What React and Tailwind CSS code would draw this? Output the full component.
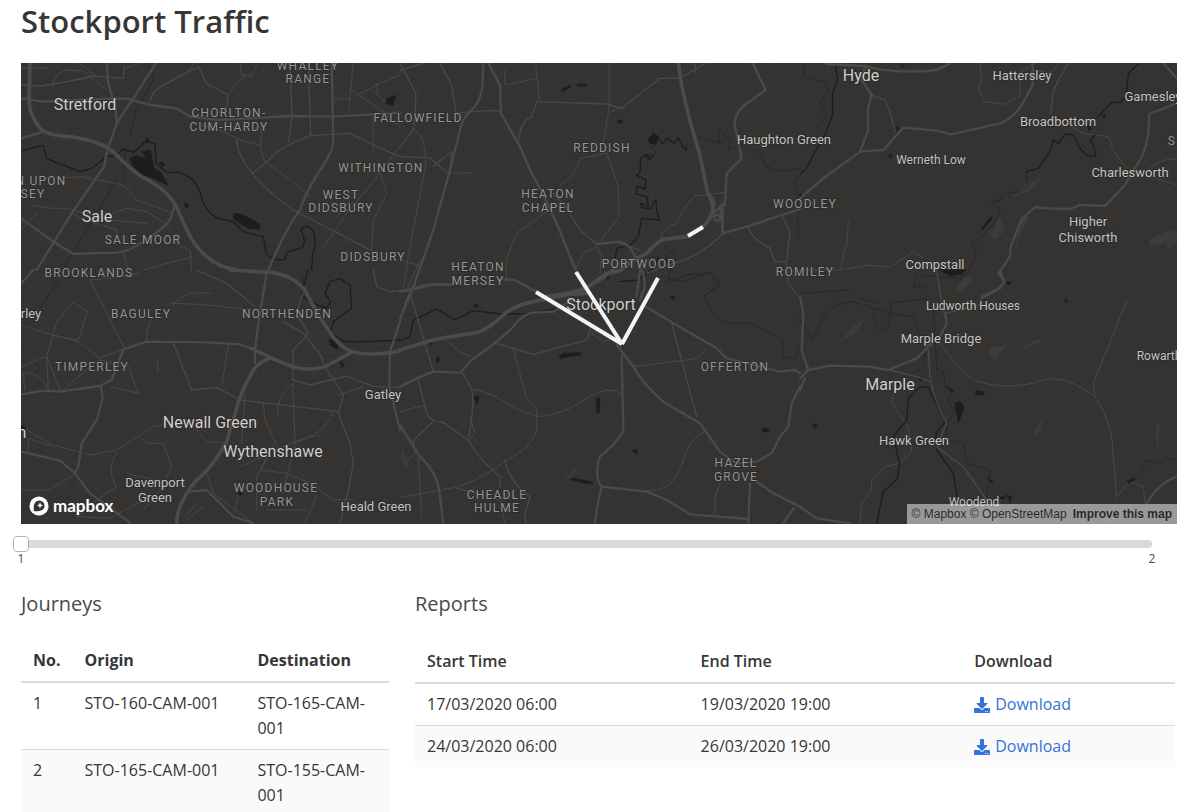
import React, { useState } from 'react';
import { FaDownload } from 'react-icons/fa';

const JOURNEYS = [
  { no: 1, origin: 'STO-160-CAM-001', destination: 'STO-165-CAM-001' },
  { no: 2, origin: 'STO-165-CAM-001', destination: 'STO-155-CAM-001' },
];

const REPORTS = [
  { start: '17/03/2020 06:00', end: '19/03/2020 19:00' },
  { start: '24/03/2020 06:00', end: '26/03/2020 19:00' },
];

// x = centre of the label, y = baseline
const TOWNS = [
  { name: 'Stretford', x: 85, y: 110 },
  { name: 'Sale', x: 97, y: 222 },
  { name: 'Hyde', x: 861, y: 81 },
  { name: 'Newall Green', x: 210, y: 428 },
  { name: 'Wythenshawe', x: 273, y: 457 },
  { name: 'Stockport', x: 601, y: 310 },
  { name: 'Marple', x: 890, y: 390 },
  { name: 'n', x: 22, y: 438 },
];

const VILLAGES = [
  { name: 'Hattersley', x: 1022, y: 80 },
  { name: 'Gamesley', x: 1153, y: 101 },
  { name: 'Broadbottom', x: 1058, y: 126 },
  { name: 'Haughton Green', x: 784, y: 144 },
  { name: 'Charlesworth', x: 1130, y: 177 },
  { name: 'Higher', x: 1088, y: 226 },
  { name: 'Chisworth', x: 1088, y: 242 },
  { name: 'Compstall', x: 935, y: 269 },
  { name: 'Marple Bridge', x: 941, y: 343 },
  { name: 'Hawk Green', x: 914, y: 445 },
  { name: 'Gatley', x: 383, y: 399 },
  { name: 'Davenport', x: 155, y: 487 },
  { name: 'Green', x: 155, y: 502 },
  { name: 'Heald Green', x: 376, y: 511 },
  { name: 'rley', x: 31, y: 318 },
];

const HAMLETS = [
  { name: 'Werneth Low', x: 931, y: 164 },
  { name: 'Ludworth Houses', x: 973, y: 310 },
  { name: 'Rowarth', x: 1159, y: 360 },
  { name: 'Woodend', x: 974, y: 506 },
];

const SUBURBS = [
  { name: 'WHALLEY', x: 308, y: 70 },
  { name: 'RANGE', x: 308, y: 83 },
  { name: 'FALLOWFIELD', x: 418, y: 122 },
  { name: 'CHORLTON-', x: 229, y: 117 },
  { name: 'CUM-HARDY', x: 229, y: 131 },
  { name: 'WITHINGTON', x: 381, y: 172 },
  { name: 'WEST', x: 341, y: 199 },
  { name: 'DIDSBURY', x: 341, y: 212 },
  { name: 'REDDISH', x: 602, y: 152 },
  { name: 'HEATON', x: 548, y: 198 },
  { name: 'CHAPEL', x: 548, y: 212 },
  { name: 'N UPON', x: 41, y: 185 },
  { name: 'SEY', x: 33, y: 198 },
  { name: 'SALE MOOR', x: 143, y: 244 },
  { name: 'BROOKLANDS', x: 89, y: 277 },
  { name: 'DIDSBURY', x: 373, y: 261 },
  { name: 'HEATON', x: 478, y: 271 },
  { name: 'MERSEY', x: 478, y: 285 },
  { name: 'PORTWOOD', x: 639, y: 268 },
  { name: 'WOODLEY', x: 805, y: 208 },
  { name: 'ROMILEY', x: 805, y: 276 },
  { name: 'BAGULEY', x: 141, y: 318 },
  { name: 'NORTHENDEN', x: 287, y: 318 },
  { name: 'TIMPERLEY', x: 92, y: 371 },
  { name: 'OFFERTON', x: 735, y: 371 },
  { name: 'HAZEL', x: 736, y: 467 },
  { name: 'GROVE', x: 736, y: 481 },
  { name: 'WOODHOUSE', x: 276, y: 492 },
  { name: 'PARK', x: 277, y: 506 },
  { name: 'CHEADLE', x: 497, y: 499 },
  { name: 'HULME', x: 497, y: 512 },
  { name: 'S', x: 1172, y: 145 },
];

// Map sheets, every sheet is 400 units wide and drawn at 3x detail
const SHEETS = [
  {
    id: 'nw',
    transform: 'translate(0 0) scale(0.33333)',
    motorways: 'M90 189L87 310Q92 352 125 390Q145 405 210 410Q285 420 325 445C365 475 390 510 425 530C470 552 505 580 525 612C555 672 570 730 620 770Q655 802 710 809',
    primary: 'M468 189L410 280L350 370L322 450L312 500L215 640L110 810M63 415L125 397M350 370L348 330L325 250L320 189M995 189L1000 420Q1000 450 970 495Q920 570 900 630Q860 680 805 810M525 615L510 660Q480 695 430 725Q380 762 330 758L220 762L160 725L63 655M63 295L130 305L340 295L380 296L450 315L530 325L570 350L660 360L870 348L1000 350L1200 338',
    secondary: 'M710 420Q712 465 757 520Q795 570 880 630L1120 755M757 520Q800 490 830 455Q880 425 930 407L1050 400L1120 435L1200 470M870 189L876 350L866 425M925 189L932 405M63 255L120 258Q180 250 285 228L370 235L372 200M450 305Q455 270 500 250L595 200L620 250L685 285L680 320',
    minor: 'M63 204L145 204M160 260Q155 225 200 210L250 213L320 270M370 205L420 190M235 189L285 225M720 189L725 225L755 230L770 195M685 285L710 250L740 225M1060 189L1046 330M1003 297L1050 297M1046 265L1130 320L1200 380M1120 350L1120 460M1060 290L1140 250L1200 225M1130 250L1132 285L1160 310M600 375L660 390L720 420L785 437M785 370L782 450L795 485L870 540L930 590M590 189L600 210M585 189L560 215M170 535L245 530L370 555L410 600L520 640M100 615L150 625L200 625L330 660L440 670M340 640L380 625L440 635L510 680M210 635L240 655L350 690L350 720M63 690L110 640M370 760L385 810M520 730L570 750L575 810M575 770L430 810M1200 440L1100 570L1040 640L965 750M1140 520L1160 580L1120 660L1115 750M1050 600L1010 650',
    rivers: 'M63 452L130 436L140 475L175 490L240 515L275 505L320 470L350 465L370 447L402 457L438 422L465 432L468 490L500 517L540 517Q585 532 600 575Q610 635 655 655L700 665L730 695L790 710L798 760Q820 785 852 778L865 755L908 742Q920 720 902 690Q920 665 940 695Q952 725 938 765L935 810',
    canals: 'M436 189L452 205M460 225L455 250L408 330L390 410M268 678L220 752L190 810M375 450L370 540M350 540L268 678',
    water: 'M390 475L405 467L440 475L425 455L452 450L455 470L462 505L485 520L505 557L470 540L430 525L400 500ZM480 486L490 487L495 497L484 497ZM556 610L566 613L562 624L554 620ZM702 640L725 643L780 672L778 688L745 685L722 672L700 655ZM1162 295L1188 286L1178 318L1158 310ZM438 412L448 420L440 430Z',
  },
  {
    id: 'n',
    transform: 'translate(400 60) scale(0.33333)',
    motorways: 'M835 10L845 75Q865 175 900 285L922 395L940 440Q940 470 910 500M860 530L790 538Q765 550 740 580L700 600L660 632L620 640L550 690L455 708',
    primary: 'M250 10L247 80Q240 130 210 155Q185 175 175 230L150 330L100 510L40 680L25 720M265 10L300 75L303 160L360 260L390 330L420 385L470 490L527 630M0 693L30 690L90 675L155 673M310 658L345 660L405 693M968 430L968 520L1040 500L1200 447M590 552L660 545Q690 550 705 590L730 640L735 680L720 720M975 435L980 340L1025 295L1003 190Q1010 145 1055 120L1097 90L1058 10',
    secondary: 'M120 10L155 75L168 160L210 155M0 10L48 100L45 170L40 210L0 260M0 30L70 10M210 155L260 152L303 153M0 290L90 293L150 345L155 275L100 318M590 552L540 510L500 445L460 400M410 125L395 170Q360 185 357 240M410 125L620 132L665 145L780 55L840 55L915 10M1040 500L1070 540L1110 565L1125 605L1160 605L1170 515L1145 465M970 520Q900 590 820 610L740 640M640 545L720 570',
    minor: 'M407 10L418 120M315 30L315 75L410 55M885 10L888 45M628 10L628 140L610 250L655 380L657 470L600 545M615 280L540 295Q525 355 480 375M635 155L665 140M40 210Q75 220 78 310L30 560L10 680M160 340L215 338M440 455L350 520L318 600L320 655M975 397L885 408Q850 440 830 490Q790 500 780 535M0 600L60 618M527 630L550 580L590 560L605 590L600 640M1160 605L1165 670L1195 710M60 600L20 690',
    rivers: 'M850 262L835 232L822 250L800 235L788 252L770 228L760 245M758 285L750 300L735 285L722 295L720 340L708 345L738 360L735 388L712 378L708 400L742 412L745 440L722 430L725 442L750 447L768 418L770 450L778 480L725 475L715 530L690 555L650 565L645 600M660 665L715 660L760 625L775 590',
    canals: 'M890 228L960 250L955 205L990 245L985 270L1000 265M1070 265L1100 320L1150 335L1200 325M755 255L768 280L740 300M800 610Q790 580 815 575L830 600Q810 620 805 660L850 665L930 635L960 665L915 710M1200 345L1183 370L1193 410L1195 530',
    water: 'M485 88L512 75L510 83L488 96ZM532 72L558 73L557 78L534 78ZM655 180L665 180L668 188L657 190ZM745 237L760 220L775 230L768 255L748 248ZM852 262L862 264L858 272ZM738 282L748 282L745 290ZM815 710L823 712L821 720ZM618 648L628 648L624 658Z',
  },
  {
    id: 'ne',
    transform: 'translate(800 60) scale(0.33333)',
    motorways: '',
    primary: 'M240 28Q320 40 410 30L450 10M0 415L70 355L180 275L250 270L310 203L410 212L455 223L600 190Q640 175 665 135L698 75L698 10M80 12L190 18L240 28M195 18L185 60L215 105L203 150L205 210L180 275M1131 130L1048 162L1045 220Q1035 290 1000 330L975 375L915 438L840 435L810 447L745 445L705 442Q660 475 650 515L632 560L630 590L595 640L615 665L590 690L545 710M1090 10L1131 55',
    secondary: 'M215 105L255 120L270 155L285 215M805 10L775 60L760 95L752 160',
    minor: 'M540 10L545 60L535 80L550 125L610 133L660 110L660 40L700 10M815 200L850 220L925 230L945 280L980 325M1045 330Q1070 295 1131 297M1070 355L1131 375M145 485L140 550L120 628M0 630L120 630L210 615L270 622L340 575L370 595M410 640L425 720M700 30L750 40L780 10',
    rivers: 'M1018 10L985 40L978 110L960 128L935 126L890 175M885 225L872 240L888 275L885 290L860 285L840 265L820 225L795 222L775 250L760 240L750 275L715 325L678 335M105 10L113 60L97 100L98 165L68 240L40 285L20 325L0 343',
    canals: 'M678 335L685 378L660 395L605 403L600 420L573 425L602 450L590 480L545 530L515 550L530 580L510 630L480 655L350 645L340 680L380 685M10 10L15 50L70 65L88 95L60 125L80 165L50 200M0 700L150 690',
    water: 'M543 507L572 470L577 475L550 508ZM425 630L490 632L488 642L450 648ZM865 200L875 205L868 212ZM910 163L918 168L912 175ZM290 200L298 203L292 214ZM265 284L278 287L272 295ZM303 14L314 17L308 23ZM620 665L634 668L626 674ZM0 400L8 410L0 420Z',
  },
  {
    id: 'sw',
    transform: 'translate(0 270) scale(0.33333)',
    motorways: 'M690 0L820 8Q890 20 920 70Q950 130 985 180Q1015 230 1055 245Q1120 260 1200 243M755 235L810 262Q860 285 880 290Q920 305 975 290L1055 247M810 265Q765 280 750 320Q720 370 710 415L680 515Q640 590 590 630Q530 700 530 760',
    primary: 'M800 10L775 160L765 240L765 280M63 373L130 362L180 365L300 348L335 330L370 238L440 215L620 217L720 223L765 240M303 348L308 385L290 450L245 520L235 590L225 610M63 545L180 572L225 610L270 670L390 758M1200 155L1170 245L1168 350L1200 480M63 40L100 0M570 665L620 660L700 740L760 760',
    secondary: 'M915 50L890 130L925 190L880 240L878 330L930 345L1040 318L1120 350L1200 352M955 240L975 290L1030 375L1015 430L1050 520L1060 580L1045 660L1020 760M590 0L680 40L740 90L765 110M850 155L910 190L950 240M520 220L575 360L650 352L720 390L1015 425M1120 0L1130 50L1170 65L1200 62',
    minor: 'M270 30L372 230M63 165L155 195L235 210L262 125L220 97L170 155L140 260L63 290M160 195L235 215L300 265L372 235M75 360L70 310Q120 300 145 360L140 260L180 360M190 360L270 290L300 270L385 290L415 370L335 350M455 145L440 185L440 215M520 105Q545 60 630 70M510 100L600 103L760 120M685 223L665 348M473 265L473 305M735 370L730 450L725 520M790 400L795 450L830 525M835 440Q820 390 878 340L885 520L855 640M880 520Q980 490 1000 425M590 480L620 515L680 520M820 525L780 600L860 610L930 640L1000 690L1060 688M800 570L770 620L770 720M830 540Q900 505 960 495M63 470L160 525L270 555L350 540L460 470L490 465M420 500L440 520L490 520L515 590L480 660L430 720M350 545Q315 600 350 650L290 690L230 740L330 745L430 690M63 660L145 660L230 610M560 750L610 710M555 740L590 700M700 740L715 680L745 640M915 760L950 680M160 530L85 505L85 540M720 590L790 560M620 610L640 670L760 760M800 720L920 720M1015 375L1090 350M460 630L380 610M272 30L330 25L420 10',
    rivers: 'M923 0L905 75L930 95L980 115L992 95L975 70L990 35L1020 25L1050 45L1055 115L1000 155L990 190L1035 215L1100 215L1200 210',
    canals: 'M180 25L145 75L120 115M63 470L75 475M905 75L910 20',
    water: 'M988 208L1015 215L1012 238L990 225ZM1020 272L1035 285L1026 292ZM63 465L78 475L72 485L63 478ZM715 665L728 670L720 678Z',
  },
  {
    id: 's',
    transform: 'translate(400 270) scale(0.33333)',
    motorways: 'M0 240L80 215L120 205L230 188Q270 175 310 135Q345 105 400 95L520 70L590 35L640 0M440 78L560 70',
    primary: 'M0 350L50 325L100 305L180 308L215 270Q290 220 340 170Q370 130 400 128L460 125L490 105L520 90M650 225L700 290Q730 345 790 395L900 460L960 545L1010 580L1070 575L1115 550L1140 500L1165 470L1175 400L1200 350M665 260L670 480Q660 510 600 560Q580 620 605 650Q590 710 585 760M605 650L740 665L800 690L870 733L1045 747M735 108L820 160L950 235L980 265L1080 290L1140 305L1185 300L1200 310M0 465L60 560Q115 610 120 680L130 760M1050 640L1045 760M1070 635L1120 670L1200 710M1180 715L1150 760M720 0L710 80M45 40L25 80L0 150M0 65L20 60L90 43L155 45',
    secondary: 'M55 330L80 430Q90 455 130 457L205 510Q230 560 300 620L300 650M315 570Q330 640 390 680L375 730L378 760M30 70L100 305M290 220L400 253L560 210L575 165M185 305L215 355Q225 400 205 510M45 550L40 510L100 455M815 160L890 440',
    minor: 'M340 235L378 380L410 415L410 480Q390 540 320 570Q260 620 175 650L0 683M220 357Q280 370 345 415L410 440Q480 440 560 385Q620 345 665 370M210 510L225 490L210 440M140 210Q175 250 215 260M620 180L580 185L560 210M700 290L860 270Q900 270 920 235M910 485Q860 520 850 570Q830 650 770 660L740 662M945 735L945 680L960 640M500 630L530 595M55 560L65 740M0 425L75 405M170 655L300 690L315 760M10 540Q0 560 20 590L18 560M20 575L45 550M575 190L610 215L655 200',
    rivers: 'M0 212L30 200L40 150L110 117L165 150L220 122L300 132L390 130L470 115',
    canals: 'M800 20Q810 40 860 15L930 10L960 50L915 75Q930 150 1000 160L1050 160L1145 205L1150 260L1185 265L1200 230',
    water: 'M478 258L490 250L540 248L543 255L500 262L480 265ZM590 385L600 385L598 428L590 428ZM222 380L238 382L230 402ZM110 262L118 262L116 278L110 276ZM90 218L98 220L92 227ZM222 105L232 102L236 108L224 112ZM515 625L550 630L578 637L576 642L545 638L515 630ZM697 542L710 537L712 552ZM1087 475L1105 475L1107 483L1090 486ZM812 78L822 80L818 87Z',
  },
  {
    id: 'se',
    transform: 'translate(800 270) scale(0.33333)',
    motorways: '',
    primary: 'M0 80L10 130L5 240L25 300L0 325M25 300L90 287L205 290L265 300L350 265L395 220M600 0L612 35L600 55L545 85M435 130L440 160L420 200M1131 620Q1080 635 1040 700M0 710L50 745L150 760M0 360L15 325',
    secondary: 'M385 240L390 320Q400 390 440 460L410 530L490 590L560 690L590 760M270 300L350 320L390 335M435 130L540 105',
    minor: 'M410 0L430 130M280 370L275 400L325 470L335 545L300 580L255 590L215 630Q220 670 185 700L180 760M420 220Q470 290 520 330Q600 360 700 340Q760 310 830 345L885 380L880 340L945 180L980 90M885 380Q940 460 940 560L950 680L990 635L1030 650L1035 700M950 690L920 760M350 210L395 230',
    rivers: 'M360 350L385 352L435 455L408 490L410 540L460 610L475 700M360 350L325 385L320 450L280 500L298 580L293 625L250 665L230 760',
    canals: 'M0 150L35 210L65 150Q95 95 160 95L270 130L340 140L360 200L375 240L370 290L345 310M215 115L230 170Q255 190 265 170L275 100L380 85M180 85L230 100M400 100L410 300L430 305L435 350L460 370L440 390L465 425L440 460L440 510L490 520L500 580L570 600L560 680M1020 610L1040 570L1080 580L1100 565L1131 570M1020 620L985 640',
    water: 'M420 0L500 0L470 12L435 10ZM465 400L480 394L493 412L475 458L470 430ZM442 348L460 364L455 368ZM528 362L552 366L550 374L528 376ZM40 462L52 465L48 474L40 470ZM355 325L370 322L365 332ZM563 625L580 635L575 638ZM595 682L615 680L612 688ZM618 676L635 680L630 700L625 685ZM980 632L1005 624L1000 632L985 638ZM795 88L804 92L798 97ZM620 36L634 40L626 45Z',
  },
];

// Woods and rough ground in the hills
const WOODS = [
  'M1005 230L1000 215L990 235L995 240Z',
  'M1030 182L1040 180L1028 192L1010 198Z',
  'M1020 216L1030 216L1022 230L1015 250L1018 232Z',
  'M1150 240L1170 229L1177 232L1177 242L1164 252L1168 243L1148 246Z',
  'M850 330L866 316L855 334L840 342Z',
  'M990 348L1007 345L995 360L989 356Z',
  'M1022 350Q1030 338 1044 341L1030 346Z',
  'M955 290L966 276L973 280L960 292Z',
  'M1034 430L1043 418L1040 432L1035 436Z',
  'M1157 422L1160 425L1158 447L1156 440Z',
];

const LINKS = ['M536 292L622 344', 'M576 272L622 344', 'M658 278L622 344', 'M688 236L703 227'];

const MapLabels = ({ items, className }) => (
  <g className={className} textAnchor="middle" paintOrder="stroke" stroke="#242424" strokeWidth="1">
    {items.map((item, idx) => (
      <text key={idx} x={item.x} y={item.y}>{item.name}</text>
    ))}
  </g>
);

const TrafficMap = () => (
  <div className="relative h-[461px] overflow-hidden bg-[#343332]">
    <svg
      viewBox="21 63 1156 461"
      preserveAspectRatio="xMidYMid slice"
      className="block w-full h-full font-[Roboto,sans-serif]"
      role="img"
      aria-label="Map of Stockport"
    >
      <defs>
        <pattern id="streets" width="19" height="17" patternUnits="userSpaceOnUse" patternTransform="rotate(12)">
          <path d="M0 4H19M6 4V17M13 0V11M6 11H19" stroke="#3a3938" strokeWidth="1" fill="none" opacity="0.35" />
        </pattern>
      </defs>
      <path d="M21 63H830L800 200L790 300L740 524H21Z" fill="url(#streets)" />
      <g fill="#333534">
        <path d="M150 70L205 75L225 95L180 105L150 95ZM172 305L250 312L250 338L185 338ZM420 440L465 445L450 475L425 465Z" />
        <path d="M900 140L970 150L950 185L890 175Z" />
      </g>
      <g fill="#41403f" opacity="0.7">
        {WOODS.map((d) => <path key={d} d={d} />)}
      </g>

      {SHEETS.map((sheet) => (
        <g key={sheet.id} transform={sheet.transform} fill="none" strokeLinejoin="round" strokeLinecap="round">
          <path d={sheet.minor} stroke="#484847" strokeWidth="3" />
          <path d={sheet.canals} stroke="#272727" strokeWidth="3" />
          <path d={sheet.rivers} stroke="#1c1d1d" strokeWidth="4" />
          <path d={sheet.water} fill="#1c1e1d" stroke="#1c1e1d" strokeWidth="2" />
          <path d={sheet.secondary} stroke="#494948" strokeWidth="4" />
          <path d={sheet.primary} stroke="#4a4a49" strokeWidth="7" />
          <path d={sheet.motorways} stroke="#4b4b4b" strokeWidth="11" />
        </g>
      ))}

      {/* Denton roundabout */}
      <g fill="none" stroke="#4a4a4a" strokeWidth="2">
        <circle cx="717" cy="218" r="3" />
        <path d="M709 192L715 203L706 224M722 204L712 216L704 226M720 208L723 232" />
      </g>

      <MapLabels items={SUBURBS} className="text-[12px] tracking-widest fill-[#969696]" />
      <MapLabels items={HAMLETS} className="text-[12px] fill-[#c4c4c4]" />
      <MapLabels items={VILLAGES} className="text-[13px] fill-[#c4c4c4]" />
      <MapLabels items={TOWNS} className="text-[16px] fill-[#d0d0d0]" />

      <g stroke="#f4f4f4" strokeWidth="4" fill="none">
        {LINKS.map((d) => <path key={d} d={d} />)}
      </g>
    </svg>

    <a href="#mapbox" className="absolute left-2 bottom-2 flex items-center gap-1 text-white">
      <svg viewBox="0 0 20 20" className="w-5 h-5">
        <circle cx="10" cy="10" r="9.5" fill="#ffffff" />
        <path d="M5 15Q4 9 6.500 6A5 5 0 1 1 14 13.500Q11 16 5 15Z" fill="#343332" />
        <path d="M11 6.200L11.900 8.400L14.100 9.300L11.900 10.200L11 12.400L10.100 10.200L7.900 9.300L10.100 8.400Z" fill="#ffffff" />
      </svg>
      <span className="font-[Lato,sans-serif] font-bold text-[17px] leading-5">mapbox</span>
    </a>

    <div className="absolute right-0 bottom-0 flex gap-[6px] px-[5px] bg-white/50 font-['Liberation_Sans',Arial,sans-serif] text-[12px] leading-5 text-black/75">
      <span><a href="#about">© Mapbox</a> <a href="#copyright">© OpenStreetMap</a></span>
      <a href="#feedback" className="font-bold">Improve this map</a>
    </div>
  </div>
);

const TimeSlider = () => {
  const [value, setValue] = useState(1);

  return (
    <div className="mt-[12px] mr-[25px]">
      <input
        type="range"
        min="1"
        max="2"
        value={value}
        onChange={(e) => setValue(Number(e.target.value))}
        aria-label="Time period"
        className="block w-full h-4 appearance-none bg-transparent [&::-webkit-slider-runnable-track]:h-2 [&::-webkit-slider-runnable-track]:rounded-full [&::-webkit-slider-runnable-track]:bg-[#dadada] [&::-webkit-slider-thumb]:appearance-none [&::-webkit-slider-thumb]:w-4 [&::-webkit-slider-thumb]:h-4 [&::-webkit-slider-thumb]:-mt-1 [&::-webkit-slider-thumb]:-ml-2 [&::-webkit-slider-thumb]:rounded [&::-webkit-slider-thumb]:border [&::-webkit-slider-thumb]:border-[#b5b5b5] [&::-webkit-slider-thumb]:bg-white"
      />
      <div className="flex justify-between -mx-2 text-[12px] leading-[14px] text-[#4a4a4a]">
        <span className="w-4 text-center">1</span>
        <span className="w-4 text-center">2</span>
      </div>
    </div>
  );
};

const JourneysTable = () => (
  <section>
    <h2 className="text-[20px] leading-6 text-[#4a4a4a]">Journeys</h2>
    <table className="mt-6 w-full table-fixed text-left text-[16px] leading-[25px]">
      <thead>
        <tr className="border-b-2 border-[#dbdbdb]">
          <th className="w-[14%] px-3 py-2 font-bold">No.</th>
          <th className="w-[47%] px-3 py-2 font-bold">Origin</th>
          <th className="px-3 py-2 font-bold">Destination</th>
        </tr>
      </thead>
      <tbody>
        {JOURNEYS.map((journey) => (
          <tr key={journey.no} className="align-top border-b border-[#dbdbdb] even:bg-[#fafafa]">
            <td className="px-3 py-2">{journey.no}</td>
            <td className="px-3 py-2 whitespace-nowrap">{journey.origin}</td>
            <td className="px-3 py-2">{journey.destination}</td>
          </tr>
        ))}
      </tbody>
    </table>
  </section>
);

const ReportsTable = () => (
  <section className="col-span-2 pr-[2px]">
    <h2 className="text-[20px] leading-6 text-[#4a4a4a]">Reports</h2>
    <table className="mt-6 w-full table-fixed text-left text-[16px] leading-[25px]">
      <thead>
        <tr className="border-b-2 border-[#dbdbdb]">
          <th className="w-[36%] px-3 pt-[9px] pb-2 font-semibold">Start Time</th>
          <th className="w-[36%] px-3 pt-[9px] pb-2 font-semibold">End Time</th>
          <th className="px-3 pt-[9px] pb-2 font-semibold">Download</th>
        </tr>
      </thead>
      <tbody>
        {REPORTS.map((report) => (
          <tr key={report.start} className="border-b border-[#dbdbdb] last:border-b-0 even:bg-[#fafafa]">
            <td className="px-3 py-2">{report.start}</td>
            <td className="px-3 py-2">{report.end}</td>
            <td className="px-3 py-2">
              <a href="#download" className="flex items-center gap-[5px] text-[#3273dc]">
                <FaDownload size={16} />
                <span>Download</span>
              </a>
            </td>
          </tr>
        ))}
      </tbody>
    </table>
  </section>
);

const App = () => {
  return (
    <main className="min-h-screen bg-white pl-[21px] pr-[23px] font-['Open_Sans','Noto_Sans',sans-serif] text-[#363636]">
      <h1 className="text-[31px] leading-[42px] pb-[21px] font-semibold">Stockport Traffic</h1>
      <TrafficMap />
      <TimeSlider />
      <div className="mt-[26px] grid grid-cols-3 gap-[26px]">
        <JourneysTable />
        <ReportsTable />
      </div>
    </main>
  );
};

export default App;
